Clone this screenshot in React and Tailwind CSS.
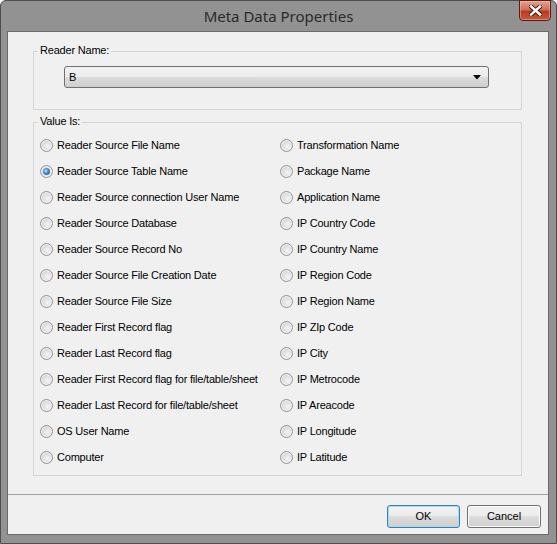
import React, { useState } from 'react';

const leftItems = [
  'Reader Source File Name',
  'Reader Source Table Name',
  'Reader Source connection User Name',
  'Reader Source Database',
  'Reader Source Record No',
  'Reader Source File Creation Date',
  'Reader Source File Size',
  'Reader First Record flag',
  'Reader Last Record flag',
  'Reader First Record flag for file/table/sheet',
  'Reader Last Record for file/table/sheet',
  'OS User Name',
  'Computer',
];

const rightItems = [
  'Transformation Name',
  'Package Name',
  'Application Name',
  'IP Country Code',
  'IP Country Name',
  'IP Region Code',
  'IP Region Name',
  'IP ZIp Code',
  'IP City',
  'IP Metrocode',
  'IP Areacode',
  'IP Longitude',
  'IP Latitude',
];

const Radio = ({ label, checked, onClick }) => (
  <div className="flex items-center h-[13px] gap-[4px] cursor-default" onClick={onClick}>
    <span className="w-[13px] h-[13px] shrink-0 rounded-full border border-[#939393] bg-[radial-gradient(circle_at_60%_60%,#f4f4f4_0%,#e2e2e2_40%,#c4c4c4_100%)] shadow-[inset_0_0_0_1px_#f6f6f6] flex items-center justify-center">
      {checked && (
        <span className="w-[7px] h-[7px] rounded-full bg-[radial-gradient(circle_at_40%_40%,#bfe4fb_0%,#3d8ad3_45%,#17457f_100%)]" />
      )}
    </span>
    <span className="whitespace-nowrap leading-[13px]">{label}</span>
  </div>
);

const GroupBox = ({ title, className, children }) => (
  <div className={`relative border border-[#d5d5d5] ${className}`}>
    <span className="absolute -top-[8px] left-[4px] px-[2px] bg-[#f0f0f0] leading-[13px]">{title}</span>
    {children}
  </div>
);

const App = () => {
  const [selected, setSelected] = useState('Reader Source Table Name');

  return (
    <div
      className="w-[557px] h-[544px] bg-[#929292] border border-[#4e4e4e] rounded-t-[6px] flex flex-col text-[11px] tracking-[-0.2px] text-black"
      style={{ fontFamily: '"Liberation Sans", Arial, sans-serif' }}
    >
      {/* title bar */}
      <div className="relative h-[30px] shrink-0 flex items-center justify-center">
        <span
          className="text-[15px] tracking-normal text-[#2a2a2a] pt-[1px]"
          style={{ fontFamily: '"Noto Sans", "Open Sans", sans-serif' }}
        >
          Meta Data Properties
        </span>
        <div className="absolute -top-[1px] right-[5px] w-[32px] h-[21px] rounded-b-[4px] border border-[#5b1c15] bg-[linear-gradient(#e0a493_0%,#cf6f5a_45%,#b83b22_55%,#c65a3c_100%)] shadow-[inset_0_0_0_1px_rgba(255,200,190,0.45)] flex items-center justify-center">
          <svg width="13" height="11" viewBox="0 0 13 11">
            <path d="M2 1.5 L11 9.5 M11 1.5 L2 9.5" stroke="#4a1a12" strokeWidth="4.4" strokeLinecap="square" />
            <path d="M2 1.5 L11 9.5 M11 1.5 L2 9.5" stroke="#ffffff" strokeWidth="2.4" strokeLinecap="square" />
          </svg>
        </div>
      </div>

      {/* client area */}
      <div className="ml-[6px] mr-[7px] mb-[8px] flex-1 border border-[#6b6b6b] bg-[#f0f0f0] flex flex-col">
        <div className="pl-[25px] pr-[26px] pt-[19px] flex flex-col">
          <GroupBox title="Reader Name:" className="h-[59px] pl-[30px] pr-[32px] pt-[14px]">
            <div className="h-[22px] rounded-[3px] border border-[#707070] bg-[linear-gradient(#f2f2f2_0%,#ebebeb_50%,#dddddd_50%,#cfcfcf_100%)] flex items-center pl-[4px] pr-[4px]">
              <span className="flex-1">B</span>
              <svg width="8" height="5" viewBox="0 0 8 5" className="mr-[3px]">
                <path d="M0 0 H8 L4 4.5 Z" fill="#000" />
              </svg>
            </div>
          </GroupBox>

          <GroupBox title="Value Is:" className="mt-[12px] h-[354px] pl-[6px] pt-[16px]">
            <div className="grid grid-cols-[240px_1fr] gap-y-[13px]">
              {leftItems.map((l, i) => (
                <React.Fragment key={l}>
                  <Radio label={l} checked={selected === l} onClick={() => setSelected(l)} />
                  <Radio
                    label={rightItems[i]}
                    checked={selected === rightItems[i]}
                    onClick={() => setSelected(rightItems[i])}
                  />
                </React.Fragment>
              ))}
            </div>
          </GroupBox>
        </div>

        <div className="mt-[18px] border-t border-[#a0a0a0]" />

        <div className="flex justify-end gap-[7px] pt-[10px] pr-[7px]">
          <button className="w-[73px] h-[23px] rounded-[3px] border border-[#3c7fb1] bg-[linear-gradient(#f2f2f2_0%,#ebebeb_50%,#dddddd_50%,#cfcfcf_100%)] shadow-[inset_0_0_0_1px_#9fdcf6] tracking-normal">
            OK
          </button>
          <button className="w-[74px] h-[23px] rounded-[3px] border border-[#707070] bg-[linear-gradient(#f2f2f2_0%,#ebebeb_50%,#dddddd_50%,#cfcfcf_100%)] shadow-[inset_0_0_0_1px_#fcfcfc] tracking-normal">
            Cancel
          </button>
        </div>
      </div>
    </div>
  );
};

export default App;
